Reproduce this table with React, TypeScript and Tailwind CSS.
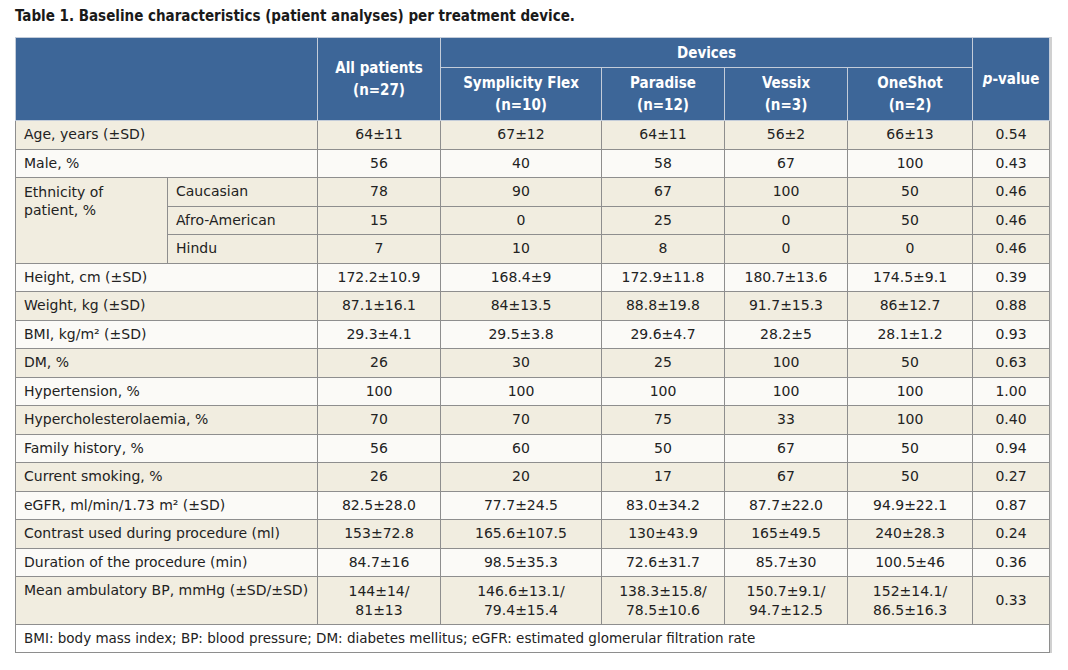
import React from 'react';

const body = '"DejaVu Sans", "Liberation Sans", sans-serif';
const cond = '"DejaVu Sans Condensed", "Liberation Sans Narrow", "Liberation Sans", sans-serif';

type Row = { label: string; vals: string[]; p: string; shade: boolean };

const rowsTop: Row[] = [
  { label: 'Age, years (±SD)', vals: ['64±11', '67±12', '64±11', '56±2', '66±13'], p: '0.54', shade: true },
  { label: 'Male, %', vals: ['56', '40', '58', '67', '100'], p: '0.43', shade: false },
];

const ethnic = [
  { label: 'Caucasian', vals: ['78', '90', '67', '100', '50'], p: '0.46' },
  { label: 'Afro-American', vals: ['15', '0', '25', '0', '50'], p: '0.46' },
  { label: 'Hindu', vals: ['7', '10', '8', '0', '0'], p: '0.46' },
];

const rowsRest: Row[] = [
  { label: 'Height, cm (±SD)', vals: ['172.2±10.9', '168.4±9', '172.9±11.8', '180.7±13.6', '174.5±9.1'], p: '0.39', shade: false },
  { label: 'Weight, kg (±SD)', vals: ['87.1±16.1', '84±13.5', '88.8±19.8', '91.7±15.3', '86±12.7'], p: '0.88', shade: true },
  { label: 'BMI, kg/m² (±SD)', vals: ['29.3±4.1', '29.5±3.8', '29.6±4.7', '28.2±5', '28.1±1.2'], p: '0.93', shade: false },
  { label: 'DM, %', vals: ['26', '30', '25', '100', '50'], p: '0.63', shade: true },
  { label: 'Hypertension, %', vals: ['100', '100', '100', '100', '100'], p: '1.00', shade: false },
  { label: 'Hypercholesterolaemia, %', vals: ['70', '70', '75', '33', '100'], p: '0.40', shade: true },
  { label: 'Family history, %', vals: ['56', '60', '50', '67', '50'], p: '0.94', shade: false },
  { label: 'Current smoking, %', vals: ['26', '20', '17', '67', '50'], p: '0.27', shade: true },
  { label: 'eGFR, ml/min/1.73 m² (±SD)', vals: ['82.5±28.0', '77.7±24.5', '83.0±34.2', '87.7±22.0', '94.9±22.1'], p: '0.87', shade: false },
  { label: 'Contrast used during procedure (ml)', vals: ['153±72.8', '165.6±107.5', '130±43.9', '165±49.5', '240±28.3'], p: '0.24', shade: true },
  { label: 'Duration of the procedure (min)', vals: ['84.7±16', '98.5±35.3', '72.6±31.7', '85.7±30', '100.5±46'], p: '0.36', shade: false },
];

const bp = [
  ['144±14/', '81±13'],
  ['146.6±13.1/', '79.4±15.4'],
  ['138.3±15.8/', '78.5±10.6'],
  ['150.7±9.1/', '94.7±12.5'],
  ['152±14.1/', '86.5±16.3'],
];

const cell = 'border border-[#8e8e8e] px-[8px] text-[#222]';
const td = `${cell} text-[14px]`;
const th = 'border border-[#c3ccd9] text-white font-bold text-[15px] leading-[22px] text-center';

const DataRow: React.FC<{ r: Row }> = ({ r }) => (
  <tr className={`h-[28.5px] ${r.shade ? 'bg-[#f1ede0]' : 'bg-[#fbfaf7]'}`}>
    <td colSpan={2} className={td}>{r.label}</td>
    {r.vals.map((v, i) => (
      <td key={i} className={`${td} text-center`}>{v}</td>
    ))}
    <td className={`${td} text-center`}>{r.p}</td>
  </tr>
);

export default function App() {
  return (
    <div className="bg-white w-[1068px] h-[670px] pl-[15px] pt-[6px]" style={{ fontFamily: body }}>
      <div className="text-[15px] font-bold text-[#1a1a1a] h-[31px] leading-[20px]" style={{ fontFamily: cond }}>
        Table 1. Baseline characteristics (patient analyses) per treatment device.
      </div>
      <table className="table-fixed border-collapse w-[1034px] shadow-[2px_0_0_#d0d0d0]">
        <colgroup>
          <col className="w-[152px]" />
          <col className="w-[150px]" />
          <col className="w-[123px]" />
          <col className="w-[161px]" />
          <col className="w-[123px]" />
          <col className="w-[123px]" />
          <col className="w-[125px]" />
          <col className="w-[77px]" />
        </colgroup>
        <thead className="bg-[#3d6698]" style={{ fontFamily: cond }}>
          <tr className="h-[30px]">
            <th colSpan={2} rowSpan={2} className={th}></th>
            <th rowSpan={2} className={th}>All patients<br />(n=27)</th>
            <th colSpan={4} className={th}>Devices</th>
            <th rowSpan={2} className={th}><i>p</i>-value</th>
          </tr>
          <tr className="h-[53px]">
            <th className={th}>Symplicity Flex<br />(n=10)</th>
            <th className={th}>Paradise<br />(n=12)</th>
            <th className={th}>Vessix<br />(n=3)</th>
            <th className={th}>OneShot<br />(n=2)</th>
          </tr>
        </thead>
        <tbody>
          {rowsTop.map((r) => <DataRow key={r.label} r={r} />)}
          {ethnic.map((e, idx) => (
            <tr key={e.label} className="h-[28.5px] bg-[#f1ede0]">
              {idx === 0 && (
                <td rowSpan={3} className={`${td} align-top pt-[5px] leading-[18px]`}>Ethnicity of<br />patient, %</td>
              )}
              <td className={td}>{e.label}</td>
              {e.vals.map((v, i) => (
                <td key={i} className={`${td} text-center`}>{v}</td>
              ))}
              <td className={`${td} text-center`}>{e.p}</td>
            </tr>
          ))}
          {rowsRest.map((r) => <DataRow key={r.label} r={r} />)}
          <tr className="h-[48px] bg-[#f1ede0]">
            <td colSpan={2} className={`${td} align-top pt-[4px] leading-[19px]`}>Mean ambulatory BP, mmHg (±SD/±SD)</td>
            {bp.map((v, i) => (
              <td key={i} className={`${td} text-center leading-[19px]`}>{v[0]}<br />{v[1]}</td>
            ))}
            <td className={`${td} text-center`}>0.33</td>
          </tr>
          <tr className="h-[28px] bg-white">
            <td colSpan={8} className={`${cell} text-[13.5px]`}>
              BMI: body mass index; BP: blood pressure; DM: diabetes mellitus; eGFR: estimated glomerular filtration rate
            </td>
          </tr>
        </tbody>
      </table>
    </div>
  );
}
